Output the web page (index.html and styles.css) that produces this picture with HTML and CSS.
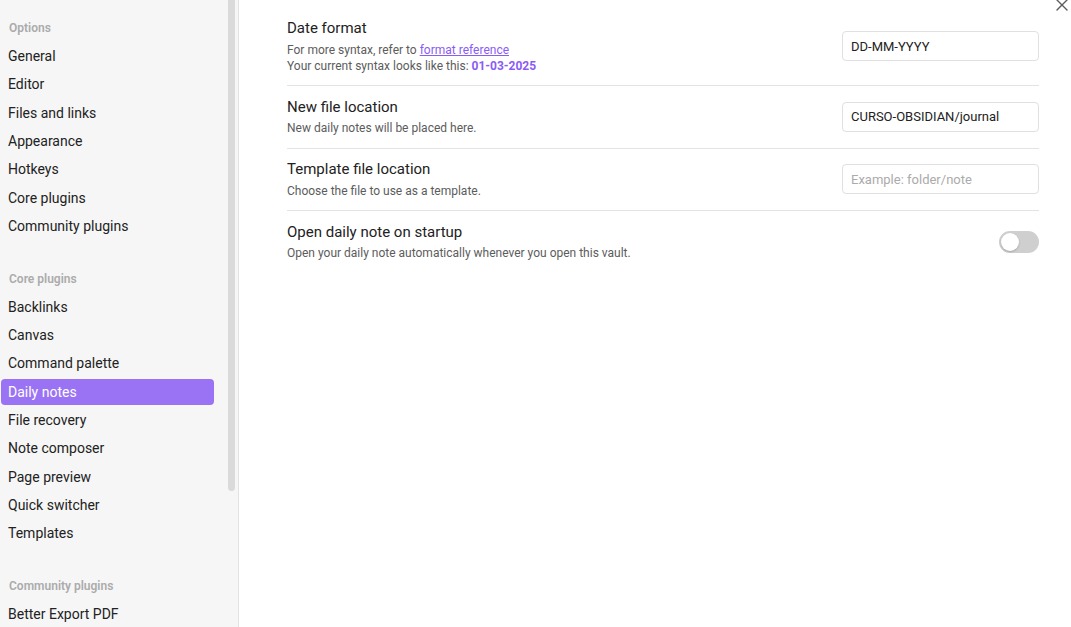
FILE: index.html
```html
<!DOCTYPE html>
<html lang="en">
<head>
<meta charset="utf-8">
<title>Settings - Daily notes</title>
<link rel="stylesheet" href="styles.css">
</head>
<body>
<div class="modal">
  <aside class="sidebar">
    <nav class="tabs">
      <div class="group">
        <div class="group-title">Options</div>
        <div class="tab">General</div>
        <div class="tab">Editor</div>
        <div class="tab">Files and links</div>
        <div class="tab">Appearance</div>
        <div class="tab">Hotkeys</div>
        <div class="tab">Core plugins</div>
        <div class="tab">Community plugins</div>
      </div>
      <div class="group">
        <div class="group-title">Core plugins</div>
        <div class="tab">Backlinks</div>
        <div class="tab">Canvas</div>
        <div class="tab">Command palette</div>
        <div class="tab is-active">Daily notes</div>
        <div class="tab">File recovery</div>
        <div class="tab">Note composer</div>
        <div class="tab">Page preview</div>
        <div class="tab">Quick switcher</div>
        <div class="tab">Templates</div>
      </div>
      <div class="group">
        <div class="group-title">Community plugins</div>
        <div class="tab">Better Export PDF</div>
      </div>
    </nav>
    <div class="scroll-thumb"></div>
  </aside>
  <main class="content">
    <div class="setting">
      <div class="info">
        <div class="name">Date format</div>
        <div class="desc">For more syntax, refer to <a class="link" href="#">format reference</a><br>Your current syntax looks like this: <b class="pop">01-03-2025</b></div>
      </div>
      <div class="control"><input class="text-input" type="text" value="DD-MM-YYYY"></div>
    </div>
    <div class="setting">
      <div class="info">
        <div class="name">New file location</div>
        <div class="desc">New daily notes will be placed here.</div>
      </div>
      <div class="control"><input class="text-input" type="text" value="CURSO-OBSIDIAN/journal"></div>
    </div>
    <div class="setting">
      <div class="info">
        <div class="name">Template file location</div>
        <div class="desc">Choose the file to use as a template.</div>
      </div>
      <div class="control"><input class="text-input" type="text" placeholder="Example: folder/note"></div>
    </div>
    <div class="setting">
      <div class="info">
        <div class="name">Open daily note on startup</div>
        <div class="desc">Open your daily note automatically whenever you open this vault.</div>
      </div>
      <div class="control"><div class="toggle"><div class="knob"></div></div></div>
    </div>
  </main>
  <button class="close" aria-label="Close">
    <svg width="14" height="14" viewBox="0 0 14 14"><path d="M2 2 L12 12 M12 2 L2 12" stroke="#5c5c5c" stroke-width="1.4" stroke-linecap="round" fill="none"/></svg>
  </button>
</div>
</body>
</html>
```

FILE: styles.css
```css
html, body {
  margin: 0;
  padding: 0;
  height: 627px;
  overflow: hidden;
  background: #ffffff;
}

body {
  font-family: Roboto, "Liberation Sans", sans-serif;
  color: #222222;
}

.modal {
  position: relative;
  display: flex;
  height: 627px;
}

.sidebar {
  position: relative;
  flex: 0 0 238px;
  background: #f6f6f6;
  border-right: 1px solid #e3e3e3;
  overflow: hidden;
}

.tabs {
  width: 213px;
  padding: 14px 0 0 1px;
  display: flex;
  flex-direction: column;
  gap: 23.5px;
}

.group-title {
  font-size: 12px;
  font-weight: 600;
  line-height: 15.6px;
  color: #ababab;
  padding: 7px 7px 6.5px 8px;
}

.tab {
  font-size: 14px;
  line-height: 18.2px;
  padding: 4px 7px;
  margin-bottom: 2.1px;
  border-radius: 4px;
  color: #222222;
  white-space: nowrap;
}

.tab.is-active {
  background: #9a72f4;
  color: #ffffff;
}

.scroll-thumb {
  position: absolute;
  top: 0;
  left: 228px;
  width: 7px;
  height: 491px;
  background: #dadada;
  border-radius: 0 0 4px 4px;
}

.content {
  flex: 1;
  padding: 7.5px 32px 0 48px;
}

.setting {
  display: flex;
  align-items: center;
  gap: 16px;
  padding: 11.5px 0;
}

.setting + .setting {
  border-top: 1px solid #e3e3e3;
}

.info {
  flex: 1;
}

.name {
  font-size: 15px;
  line-height: 19.5px;
  color: #222222;
}

.desc {
  font-size: 12px;
  line-height: 16px;
  color: #5c5c5c;
  padding-top: 3px;
}

.link {
  color: #8a5cf5;
  text-decoration: underline;
}

.pop {
  color: #8a5cf5;
  font-weight: 700;
}

.control {
  display: flex;
  justify-content: flex-end;
}

.text-input {
  box-sizing: border-box;
  width: 197px;
  height: 30px;
  padding: 4px 8px;
  border: 1px solid #e0e0e0;
  border-radius: 4px;
  background: #ffffff;
  font-family: Roboto, "Liberation Sans", sans-serif;
  font-size: 13px;
  color: #222222;
  outline: none;
}

.text-input::placeholder {
  color: #ababab;
}

.toggle {
  box-sizing: border-box;
  width: 40px;
  height: 22px;
  border-radius: 11px;
  background: #cfcfcf;
  padding: 2px;
  display: flex;
  align-items: center;
}

.knob {
  width: 18px;
  height: 18px;
  border-radius: 50%;
  background: #ffffff;
  box-shadow: 0 1px 2px rgba(0, 0, 0, 0.2);
}

.close {
  position: absolute;
  top: -3px;
  right: -1px;
  width: 20px;
  height: 16px;
  padding: 0;
  border: none;
  background: transparent;
  display: flex;
  align-items: center;
  justify-content: center;
}
```
